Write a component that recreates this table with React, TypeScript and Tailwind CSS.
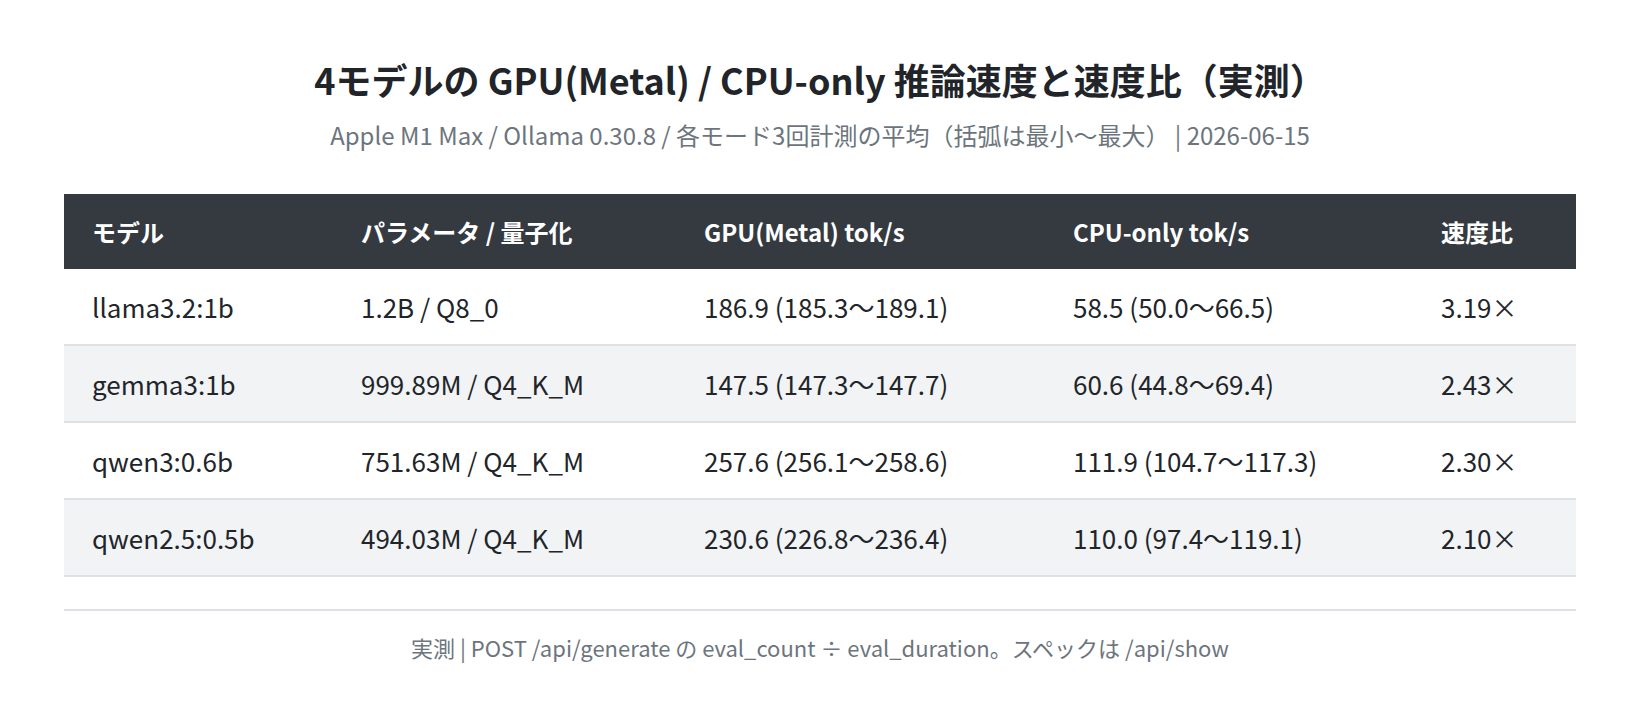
import React from "react";

const rows = [
  ["llama3.2:1b", "1.2B / Q8_0", "186.9 (185.3〜189.1)", "58.5 (50.0〜66.5)", "3.19×"],
  ["gemma3:1b", "999.89M / Q4_K_M", "147.5 (147.3〜147.7)", "60.6 (44.8〜69.4)", "2.43×"],
  ["qwen3:0.6b", "751.63M / Q4_K_M", "257.6 (256.1〜258.6)", "111.9 (104.7〜117.3)", "2.30×"],
  ["qwen2.5:0.5b", "494.03M / Q4_K_M", "230.6 (226.8〜236.4)", "110.0 (97.4〜119.1)", "2.10×"],
];

const cols = "grid grid-cols-[269px_343px_369px_368px_163px]";

export default function App() {
  return (
    <div
      className="w-[1640px] h-[704px] bg-white px-16 overflow-hidden"
      style={{ fontFamily: '"Noto Sans CJK JP", "Noto Sans", sans-serif' }}
    >
      <h1 className="pt-[55px] text-center text-[36px] leading-[48px] font-bold text-[#212529]">
        4モデルの GPU(Metal) / CPU-only 推論速度と速度比（実測）
      </h1>
      <p className="mt-[17px] text-center text-[24px] leading-[30px] text-[#6c757d]">
        Apple M1 Max / Ollama 0.30.8 / 各モード3回計測の平均（括弧は最小〜最大） | 2026-06-15
      </p>
      <div className="mt-[44px]">
        <div className={`${cols} h-[75px] items-center bg-[#343a40] text-white text-[24px] font-bold`}>
          <div className="pl-7">モデル</div>
          <div className="pl-7">パラメータ / 量子化</div>
          <div className="pl-7">GPU(Metal) tok/s</div>
          <div className="pl-7">CPU-only tok/s</div>
          <div className="pl-7">速度比</div>
        </div>
        {rows.map((r, i) => (
          <div
            key={i}
            className={`${cols} h-[77px] items-center border-b-2 border-[#dee2e6] text-[26px] text-[#212529] ${
              i % 2 === 1 ? "bg-[#f1f3f5]" : "bg-white"
            }`}
          >
            {r.map((c, j) => (
              <div key={j} className="pl-7">
                {c}
              </div>
            ))}
          </div>
        ))}
      </div>
      <div className="mt-[32px] border-t-2 border-[#dee2e6] pt-[21px] text-center text-[22px] leading-[30px] text-[#6c757d]">
        実測 | POST /api/generate の eval_count ÷ eval_duration。スペックは /api/show
      </div>
    </div>
  );
}
